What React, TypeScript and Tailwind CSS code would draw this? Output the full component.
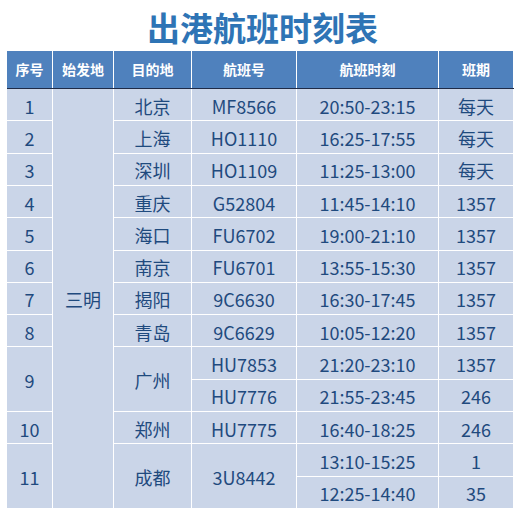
import React from "react";

// --- Data ---
type Cell = { text: string; span?: "2" | "13" };

const CELLS: Cell[] = [
  { text: "1" }, { text: "三明", span: "13" }, { text: "北京" }, { text: "MF8566" }, { text: "20:50-23:15" }, { text: "每天" },
  { text: "2" }, { text: "上海" }, { text: "HO1110" }, { text: "16:25-17:55" }, { text: "每天" },
  { text: "3" }, { text: "深圳" }, { text: "HO1109" }, { text: "11:25-13:00" }, { text: "每天" },
  { text: "4" }, { text: "重庆" }, { text: "G52804" }, { text: "11:45-14:10" }, { text: "1357" },
  { text: "5" }, { text: "海口" }, { text: "FU6702" }, { text: "19:00-21:10" }, { text: "1357" },
  { text: "6" }, { text: "南京" }, { text: "FU6701" }, { text: "13:55-15:30" }, { text: "1357" },
  { text: "7" }, { text: "揭阳" }, { text: "9C6630" }, { text: "16:30-17:45" }, { text: "1357" },
  { text: "8" }, { text: "青岛" }, { text: "9C6629" }, { text: "10:05-12:20" }, { text: "1357" },
  { text: "9", span: "2" }, { text: "广州", span: "2" }, { text: "HU7853" }, { text: "21:20-23:10" }, { text: "1357" },
  { text: "HU7776" }, { text: "21:55-23:45" }, { text: "246" },
  { text: "10" }, { text: "郑州" }, { text: "HU7775" }, { text: "16:40-18:25" }, { text: "246" },
  { text: "11", span: "2" }, { text: "成都", span: "2" }, { text: "3U8442", span: "2" }, { text: "13:10-15:25" }, { text: "1" },
  { text: "12:25-14:40" }, { text: "35" },
];

const HEADERS = ["序号", "始发地", "目的地", "航班号", "航班时刻", "班期"];

const COLS = "grid-cols-[45px_60px_77px_104px_141px_74px]";

export default function App() {
  return (
    <div
      className="w-[525px] h-[517px] bg-white"
      style={{ fontFamily: '"Noto Sans CJK SC", "Noto Sans", sans-serif' }}
    >
      {/* Title */}
      <div className="h-[51px] flex items-center justify-center">
        <h1 className="text-[33px] leading-none font-bold text-[#2E74B5] pt-[3px]">
          出港航班时刻表
        </h1>
      </div>

      <div className="ml-[7px] w-[507px]">
        {/* Header */}
        <div className={`grid ${COLS} gap-x-[1px] h-[37px]`}>
          {HEADERS.map((h) => (
            <div
              key={h}
              className="bg-[#4F81BD] text-white font-bold text-[14px] flex items-center justify-center"
            >
              {h}
            </div>
          ))}
        </div>
        <div className="h-[1px] bg-[#1F2B47]" />

        {/* Body */}
        <div
          className={`grid ${COLS} grid-rows-[repeat(13,minmax(0,1fr))] gap-[1px] h-[419px]`}
        >
          {CELLS.map((c, i) => (
            <div
              key={i}
              className={`bg-[#CAD5E8] text-[#1F4A7E] text-[18px] flex items-center justify-center pt-[3px] ${
                c.span === "13" ? "row-span-13" : c.span === "2" ? "row-span-2" : ""
              }`}
            >
              {c.text}
            </div>
          ))}
        </div>
      </div>
    </div>
  );
}
